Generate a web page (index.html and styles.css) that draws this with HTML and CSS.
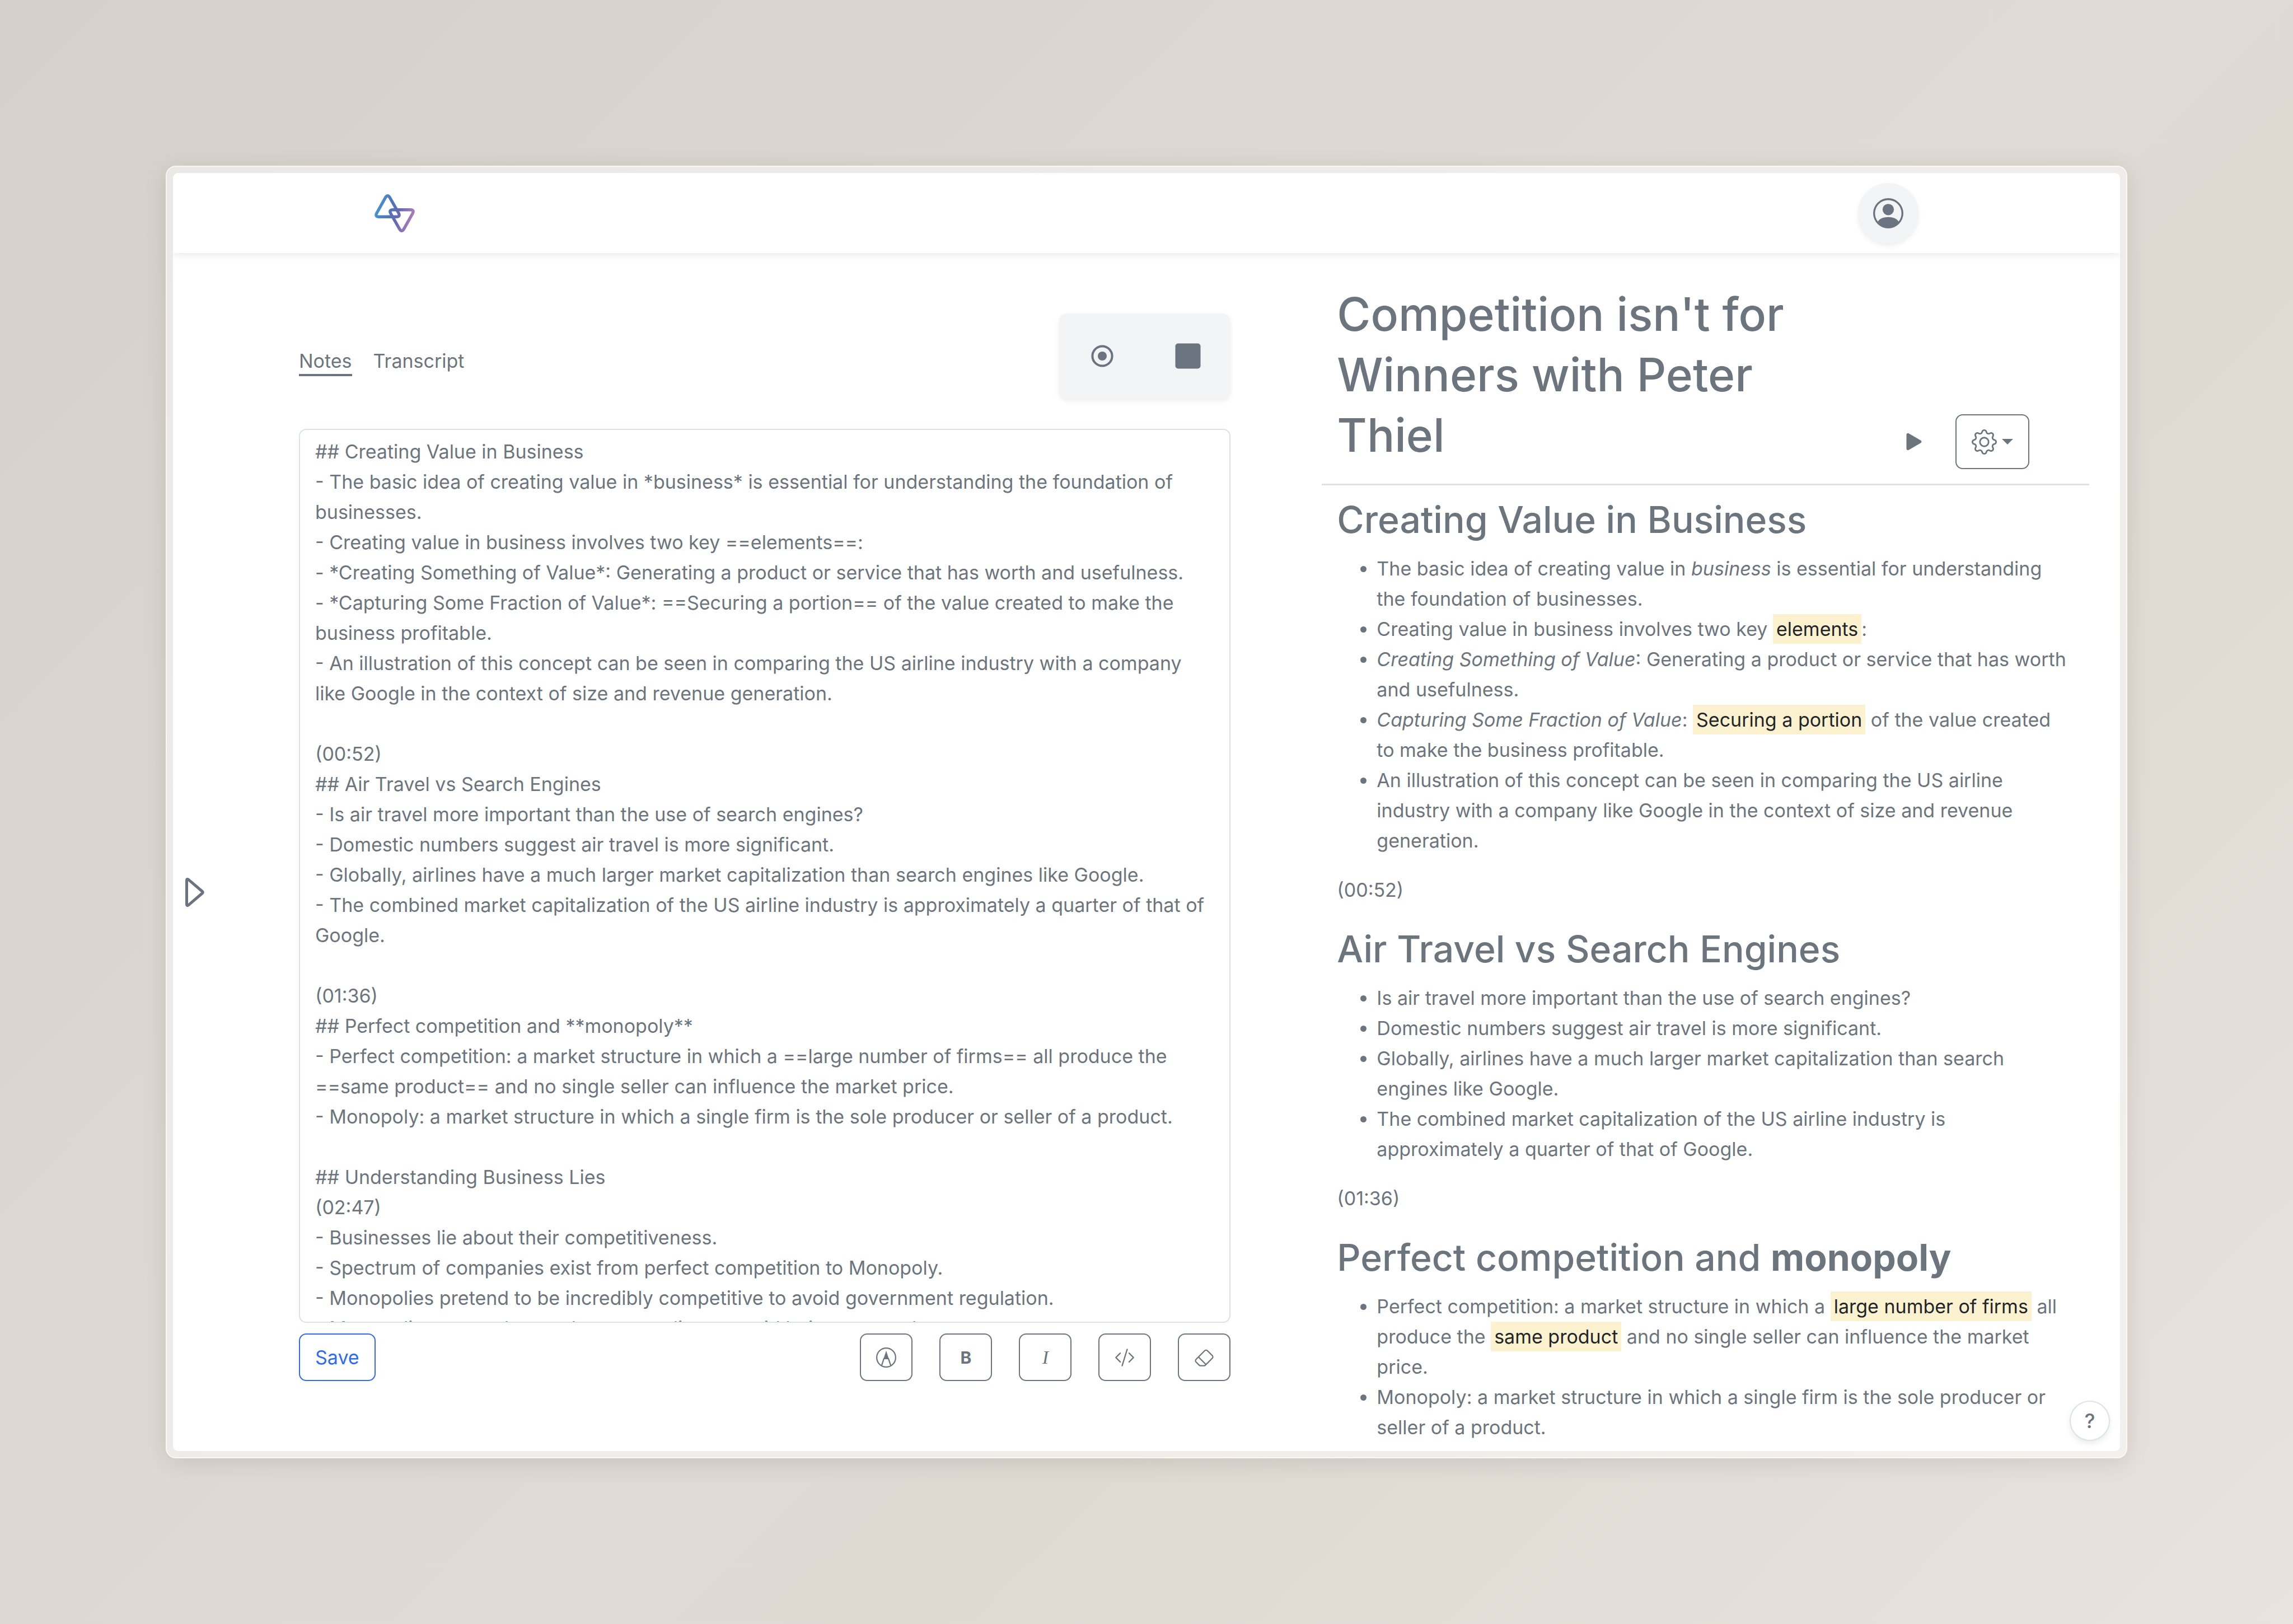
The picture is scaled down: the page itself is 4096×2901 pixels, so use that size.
FILE: index.html
```html
<!DOCTYPE html>
<html lang="en">
<head>
<meta charset="utf-8">
<title>Competition isn't for Winners with Peter Thiel</title>
<link rel="stylesheet" href="styles.css">
</head>
<body>
<div class="frame">
  <div class="app">
    <header class="topbar">
      <a class="logo" href="#" aria-label="Home">
        <svg viewBox="0 0 72 68" fill="none" stroke="url(#brand)" stroke-width="5.400">
          <defs>
            <linearGradient id="brand" gradientUnits="userSpaceOnUse" x1="0" y1="24" x2="72" y2="44">
              <stop offset="0" stop-color="#4499d5"/>
              <stop offset=".35" stop-color="#5175b9"/>
              <stop offset=".6" stop-color="#6669b0"/>
              <stop offset="1" stop-color="#b482b8"/>
            </linearGradient>
          </defs>
          <path d="M19.800 5.500Q23.400 0 27 5.500L43 33.500Q46.500 40.200 39 40.200H8Q.500 40.200 4 33.500Z"/>
          <path d="M52.200 62.500Q48.600 68 45 62.500L29 34.500Q25.500 27.800 33 27.800H64Q71.500 27.800 68 34.500Z"/>
        </svg>
      </a>
      <button class="avatar" type="button" aria-label="Account">
        <svg class="icon-lg" viewBox="0 0 16 16" fill="currentColor"><path d="M11 6a3 3 0 1 1-6 0 3 3 0 0 1 6 0z"/><path fill-rule="evenodd" d="M0 8a8 8 0 1 1 16 0A8 8 0 0 1 0 8zm8-7a7 7 0 0 0-5.468 11.37C3.242 11.226 4.805 10 8 10s4.757 1.225 5.468 2.37A7 7 0 0 0 8 1z"/></svg>
      </button>
    </header>

    <main class="workspace">
      <section class="editor">
        <div class="editor-head">
          <nav class="tabs">
            <a class="tab tab-active" href="#notes">Notes</a>
            <a class="tab" href="#transcript">Transcript</a>
          </nav>
          <div class="recorder">
            <button type="button" aria-label="Record">
              <svg class="icon-lg" viewBox="0 0 54 54"><circle cx="27" cy="27" r="17.600" fill="none" stroke="currentColor" stroke-width="4"/><circle cx="27" cy="27" r="8" fill="currentColor"/></svg>
            </button>
            <button type="button" aria-label="Stop">
              <svg class="icon-lg" viewBox="0 0 54 54"><rect x="4.500" y="4.500" width="45" height="45" rx="5" fill="currentColor"/></svg>
            </button>
          </div>
        </div>

        <textarea class="notes" aria-label="Notes" spellcheck="false">## Creating Value in Business
- The basic idea of creating value in *business* is essential for understanding the foundation of businesses.
- Creating value in business involves two key ==elements==:
- *Creating Something of Value*: Generating a product or service that has worth and usefulness.
- *Capturing Some Fraction of Value*: ==Securing a portion== of the value created to make the business profitable.
- An illustration of this concept can be seen in comparing the US airline industry with a company like Google in the context of size and revenue generation.

(00:52)
## Air Travel vs Search Engines
- Is air travel more important than the use of search engines?
- Domestic numbers suggest air travel is more significant.
- Globally, airlines have a much larger market capitalization than search engines like Google.
- The combined market capitalization of the US airline industry is approximately a quarter of that of Google.

(01:36)
## Perfect competition and **monopoly**
- Perfect competition: a market structure in which a ==large number of firms== all produce the ==same product== and no single seller can influence the market price.
- Monopoly: a market structure in which a single firm is the sole producer or seller of a product.

## Understanding Business Lies
(02:47)
- Businesses lie about their competitiveness.
- Spectrum of companies exist from perfect competition to Monopoly.
- Monopolies pretend to be incredibly competitive to avoid government regulation.
- Monopolies pretend not to be monopolies to avoid being targeted.</textarea>

        <div class="toolbar">
          <button class="btn btn-save" type="button">Save</button>
          <div class="tools">
            <button class="btn tool" type="button" aria-label="Highlight">
              <svg class="icon" viewBox="0 0 16 16" fill="none" stroke="currentColor"><circle cx="8" cy="8" r="7.500"/><path d="M4.400 14.300 6.200 8.800H9.800L11.600 14.300"/><path d="M8 4.200 6.500 8.800H9.500Z" fill="currentColor"/></svg>
            </button>
            <button class="btn tool tool-bold" type="button" aria-label="Bold">B</button>
            <button class="btn tool tool-italic" type="button" aria-label="Italic">I</button>
            <button class="btn tool" type="button" aria-label="Code">
              <svg class="icon" viewBox="0 0 16 16" fill="currentColor"><path d="M10.478 1.647a.5.5 0 1 0-.956-.294l-4 13a.5.5 0 0 0 .956.294l4-13zM4.854 4.146a.5.5 0 0 1 0 .708L1.707 8l3.147 3.146a.5.5 0 0 1-.708.708l-3.5-3.5a.5.5 0 0 1 0-.708l3.5-3.5a.5.5 0 0 1 .708 0zm6.292 0a.5.5 0 0 0 0 .708L14.293 8l-3.147 3.146a.5.5 0 0 0 .708.708l3.5-3.5a.5.5 0 0 0 0-.708l-3.5-3.5a.5.5 0 0 0-.708 0z"/></svg>
            </button>
            <button class="btn tool" type="button" aria-label="Erase">
              <svg class="icon" viewBox="0 0 16 16" fill="currentColor"><path d="M8.086 2.207a2 2 0 0 1 2.828 0l3.879 3.879a2 2 0 0 1 0 2.828l-5.5 5.5A2 2 0 0 1 7.879 15H5.12a2 2 0 0 1-1.414-.586l-2.5-2.5a2 2 0 0 1 0-2.828l6.879-6.879zm2.121.707a1 1 0 0 0-1.414 0L4.16 7.547l5.293 5.293 4.633-4.633a1 1 0 0 0 0-1.414l-3.879-3.879zM8.746 13.547 3.453 8.254 1.914 9.793a1 1 0 0 0 0 1.414l2.5 2.5a1 1 0 0 0 .707.293H7.88a1 1 0 0 0 .707-.293l.16-.16z"/></svg>
            </button>
          </div>
        </div>
      </section>

      <article class="preview">
        <div class="preview-head">
          <h1>Competition isn't for Winners with Peter Thiel</h1>
          <div class="actions">
            <button class="play" type="button" aria-label="Play">
              <svg class="icon-lg" viewBox="0 0 16 16" fill="currentColor"><path d="m11.596 8.697-6.363 3.692c-.54.313-1.233-.066-1.233-.697V4.308c0-.63.692-1.01 1.233-.696l6.363 3.692a.802.802 0 0 1 0 1.393z"/></svg>
            </button>
            <button class="btn settings" type="button" aria-label="Settings">
              <svg class="icon-md" viewBox="0 0 16 16" fill="currentColor"><path d="M8 4.754a3.246 3.246 0 1 0 0 6.492 3.246 3.246 0 0 0 0-6.492zM5.754 8a2.246 2.246 0 1 1 4.492 0 2.246 2.246 0 0 1-4.492 0z"/><path d="M9.796 1.343c-.527-1.79-3.065-1.79-3.592 0l-.094.319a.873.873 0 0 1-1.255.52l-.292-.16c-1.64-.892-3.433.902-2.54 2.541l.159.292a.873.873 0 0 1-.52 1.255l-.319.094c-1.79.527-1.79 3.065 0 3.592l.319.094a.873.873 0 0 1 .52 1.255l-.16.292c-.892 1.64.901 3.434 2.541 2.54l.292-.159a.873.873 0 0 1 1.255.52l.094.319c.527 1.79 3.065 1.79 3.592 0l.094-.319a.873.873 0 0 1 1.255-.52l.292.16c1.64.893 3.434-.902 2.54-2.541l-.159-.292a.873.873 0 0 1 .52-1.255l.319-.094c1.79-.527 1.79-3.065 0-3.592l-.319-.094a.873.873 0 0 1-.52-1.255l.16-.292c.893-1.64-.902-3.433-2.541-2.54l-.292.159a.873.873 0 0 1-1.255-.52l-.094-.319zm-2.633.283c.246-.835 1.428-.835 1.674 0l.094.319a1.873 1.873 0 0 0 2.693 1.115l.291-.16c.764-.415 1.6.42 1.184 1.185l-.159.292a1.873 1.873 0 0 0 1.116 2.692l.318.094c.835.246.835 1.428 0 1.674l-.319.094a1.873 1.873 0 0 0-1.115 2.693l.16.291c.415.764-.42 1.6-1.185 1.184l-.291-.159a1.873 1.873 0 0 0-2.693 1.116l-.094.318c-.246.835-1.428.835-1.674 0l-.094-.319a1.873 1.873 0 0 0-2.692-1.115l-.292.16c-.764.415-1.6-.42-1.184-1.185l.159-.291A1.873 1.873 0 0 0 1.945 8.93l-.319-.094c-.835-.246-.835-1.428 0-1.674l.319-.094A1.873 1.873 0 0 0 3.06 4.377l-.16-.292c-.415-.764.42-1.6 1.185-1.184l.292.159a1.873 1.873 0 0 0 2.692-1.115l.094-.319z"/></svg>
              <svg class="caret" viewBox="0 0 20 10" fill="currentColor"><path d="M0 0H20L10 10Z"/></svg>
            </button>
          </div>
        </div>

        <div class="rendered">
          <h2>Creating Value in Business</h2>
          <ul>
            <li>The basic idea of creating value in <em>business</em> is essential for understanding the foundation of businesses.</li>
            <li>Creating value in business involves two key <mark>elements</mark>:</li>
            <li><em>Creating Something of Value</em>: Generating a product or service that has worth and usefulness.</li>
            <li><em>Capturing Some Fraction of Value</em>: <mark>Securing a portion</mark> of the value created to make the business profitable.</li>
            <li>An illustration of this concept can be seen in comparing the US airline industry with a company like Google in the context of size and revenue generation.</li>
          </ul>
          <p>(00:52)</p>
          <h2>Air Travel vs Search Engines</h2>
          <ul>
            <li>Is air travel more important than the use of search engines?</li>
            <li>Domestic numbers suggest air travel is more significant.</li>
            <li>Globally, airlines have a much larger market capitalization than search engines like Google.</li>
            <li>The combined market capitalization of the US airline industry is approximately a quarter of that of Google.</li>
          </ul>
          <p>(01:36)</p>
          <h2>Perfect competition and <strong>monopoly</strong></h2>
          <ul>
            <li>Perfect competition: a market structure in which a <mark>large number of firms</mark> all produce the <mark>same product</mark> and no single seller can influence the market price.</li>
            <li>Monopoly: a market structure in which a single firm is the sole producer or seller of a product.</li>
          </ul>
        </div>
      </article>
    </main>

    <button class="drawer" type="button" aria-label="Open sidebar">
      <svg viewBox="0 0 34 52" fill="none" stroke="currentColor" stroke-width="5" stroke-linejoin="round"><path d="M2.500 4.500Q2.500 1 5.500 3.200L30.500 24.500Q32 26 30.500 27.500L5.500 48.800Q2.500 51 2.500 47.500Z"/></svg>
    </button>
    <button class="help" type="button" aria-label="Help">?</button>
  </div>
</div>
</body>
</html>
```

FILE: styles.css
```css
* {
  box-sizing: border-box;
}

body {
  margin: 0;
  height: 100vh;
  padding: 296px;
  display: flex;
  background: linear-gradient(135deg, #d5d0c9 0%, #dedad3 45%, #dfd9d2 65%, #eae2dc 100%);
  color: #6c757d;
  font-family: Inter, "Liberation Sans", sans-serif;
  font-size: 34px;
  line-height: 54px;
}

button {
  margin: 0;
  padding: 0;
  border: 0;
  background: none;
  color: inherit;
  font: inherit;
  display: flex;
  align-items: center;
  justify-content: center;
}

svg {
  display: block;
}

.frame {
  flex: 1;
  min-width: 0;
  display: flex;
  padding: 11px;
  border: 2px solid rgba(255, 255, 255, .8);
  border-radius: 18px;
  background: rgba(255, 255, 255, .5);
  background-clip: padding-box;
  box-shadow: 0 8px 40px rgba(0, 0, 0, .1);
}

.app {
  position: relative;
  flex: 1;
  min-width: 0;
  display: flex;
  flex-direction: column;
  overflow: hidden;
  border-radius: 9px;
  background: #fff;
}

.topbar {
  height: 143px;
  flex: none;
  padding: 0 360px;
  display: flex;
  align-items: center;
  justify-content: space-between;
  box-shadow: 0 5px 11px rgba(0, 0, 0, .07);
}

.logo svg {
  width: 72px;
  height: 68px;
}

.avatar {
  width: 108px;
  height: 108px;
  border-radius: 50%;
  background: #f3f4f6;
  color: #6b7280;
  box-shadow: 0 4px 9px rgba(0, 0, 0, .07);
}

.icon {
  width: 36px;
  height: 36px;
}

.icon-md {
  width: 45px;
  height: 45px;
}

.icon-lg {
  width: 54px;
  height: 54px;
}

.workspace {
  flex: 1;
  min-height: 0;
  display: grid;
  grid-template-columns: minmax(0, 17fr) minmax(0, 14fr);
  grid-template-rows: minmax(0, 1fr);
  column-gap: 163px;
  padding: 0 55px 0 225px;
}

/* Editor column */

.editor {
  display: flex;
  flex-direction: column;
  padding: 108px 0 125px;
}

.editor-head {
  display: flex;
  align-items: flex-end;
  justify-content: space-between;
  margin-bottom: 54px;
}

.tabs {
  display: flex;
  gap: 38px;
  margin-bottom: 40px;
}

.tab {
  color: inherit;
  line-height: 46px;
  text-decoration: none;
  border-bottom: 4px solid transparent;
}

.tab-active {
  border-color: #6c757d;
}

.recorder {
  display: flex;
  width: 306px;
  height: 152px;
  border-radius: 14px;
  background: #f3f4f6;
  color: #6b7280;
  box-shadow: 0 4px 9px rgba(0, 0, 0, .07);
}

.recorder button {
  flex: 1;
}

.notes {
  flex: 1;
  min-height: 0;
  width: 100%;
  margin: 0 0 19px;
  padding: 12px 27px 0;
  border: 2px solid #dee2e6;
  border-radius: 13px;
  background: #fff;
  color: inherit;
  font: inherit;
  resize: none;
  overflow: hidden;
  outline: none;
}

.toolbar {
  display: flex;
  justify-content: space-between;
}

.btn {
  height: 85px;
  border: 2px solid #6c757d;
  border-radius: 13px;
}

.btn-save {
  padding: 0 27px;
  border-color: #2f6bed;
  color: #2f6bed;
}

.tools {
  display: flex;
  gap: 48px;
}

.tool {
  width: 94px;
}

.tool-bold {
  font-size: 30px;
  font-weight: 700;
}

.tool-italic {
  font-family: "Liberation Serif", serif;
  font-size: 34px;
  font-style: italic;
}

/* Preview column */

.preview {
  padding-top: 56px;
}

.preview-head {
  display: flex;
  align-items: flex-end;
  justify-content: space-between;
  padding: 0 107px 26px 27px;
  border-bottom: 3px solid #dee2e6;
}

h1,
h2 {
  margin: 0;
  font-weight: 500;
}

h1 {
  flex: 0 1 860px;
  margin-bottom: 6px;
  font-size: 82px;
  line-height: 108px;
}

.actions {
  display: flex;
  align-items: center;
  gap: 47px;
}

.settings {
  width: 132px;
  height: 98px;
  gap: 9px;
}

.caret {
  width: 20px;
  height: 10px;
}

.rendered {
  padding: 18px 33px 0 27px;
}

h2 {
  margin-bottom: 18px;
  font-size: 66px;
  line-height: 86px;
}

ul {
  margin: 0 0 34px;
  padding-left: 71px;
}

p {
  margin: 0 0 35px;
}

mark {
  padding: 6px;
  background: #fdf2d0;
  color: #212529;
}

/* Floating controls */

.drawer {
  position: absolute;
  left: 22px;
  top: 1259px;
  color: #6b7280;
}

.drawer svg {
  width: 34px;
  height: 52px;
}

.help {
  position: absolute;
  right: 18px;
  bottom: 18px;
  width: 72px;
  height: 72px;
  border: 2px solid #dee2e6;
  border-radius: 50%;
  background: #fff;
  font-size: 36px;
  font-weight: 500;
  box-shadow: 0 5px 11px rgba(0, 0, 0, .08);
}
```
